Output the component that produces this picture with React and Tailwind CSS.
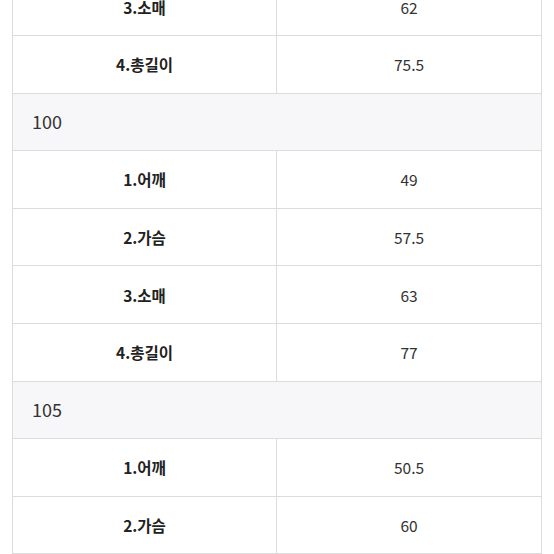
import React from "react";

const rows = [
  { t: "r", k: "3.소매", v: "62" },
  { t: "r", k: "4.총길이", v: "75.5" },
  { t: "h", k: "100" },
  { t: "r", k: "1.어깨", v: "49" },
  { t: "r", k: "2.가슴", v: "57.5" },
  { t: "r", k: "3.소매", v: "63" },
  { t: "r", k: "4.총길이", v: "77" },
  { t: "h", k: "105" },
  { t: "r", k: "1.어깨", v: "50.5" },
  { t: "r", k: "2.가슴", v: "60" },
];

export default function App() {
  return (
    <div
      className="w-[554px] h-[554px] overflow-hidden bg-white"
      style={{ fontFamily: '"Noto Sans CJK KR", "Noto Sans", sans-serif' }}
    >
      <div className="mx-3 -mt-[21.6px] border-x border-[#dcdcdc]">
        {rows.map((r, i) =>
          r.t === "h" ? (
            <div
              key={i}
              className="h-[57.6px] flex items-center pl-[19px] bg-[#f7f7f9] border-b border-[#dcdcdc] text-[18px] text-[#333]"
            >
              {r.k}
            </div>
          ) : (
            <div key={i} className="h-[57.6px] grid grid-cols-2 border-b border-[#dcdcdc] text-[15.5px]">
              <div className="flex items-center justify-center font-bold text-[#222] border-r border-[#dcdcdc] pt-px">
                {r.k}
              </div>
              <div className="flex items-center justify-center text-[#333] pt-px">{r.v}</div>
            </div>
          )
        )}
      </div>
    </div>
  );
}
